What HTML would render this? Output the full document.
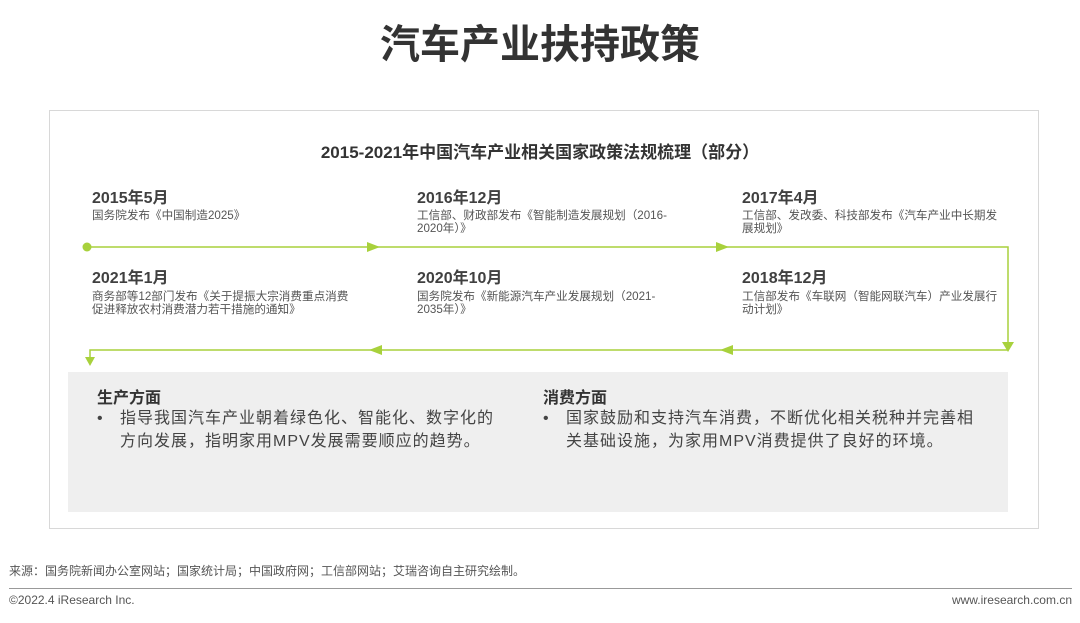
<!DOCTYPE html>
<html><head><meta charset="utf-8"><style>
body{margin:0;width:1080px;height:623px;background:#fff;position:relative;font-family:"Liberation Sans","Noto Sans CJK SC",sans-serif;color:#333;overflow:hidden}
.a{position:absolute;white-space:nowrap}
.t{font-size:40px;font-weight:bold;left:0;width:1080px;text-align:center;top:12px;color:#333}
.box{position:absolute;left:49px;top:110px;width:988px;height:417px;border:1px solid #d8d8d8}
.sub{font-size:17px;font-weight:bold;left:0;width:1080px;text-align:center;top:138px;color:#333}
.y{font-size:16px;font-weight:bold;color:#404040;line-height:18px}
.d{font-size:11.6px;color:#555;line-height:13px;white-space:normal}
.gray{position:absolute;left:68px;top:372px;width:940px;height:140px;background:#efefef}
.h{font-size:16px;font-weight:bold;color:#333}
.p{font-size:16px;letter-spacing:1px;color:#444;line-height:23px;white-space:normal}
</style></head><body>
<div class="a t">汽车产业扶持政策</div>
<div class="box"></div>
<div class="a sub">2015-2021年中国汽车产业相关国家政策法规梳理（部分）</div>

<div class="a y" style="left:92px;top:190px">2015年5月</div>
<div class="a d" style="left:92px;top:209px">国务院发布《中国制造2025》</div>
<div class="a y" style="left:417px;top:190px">2016年12月</div>
<div class="a d" style="left:417px;top:209px;width:262px">工信部、财政部发布《智能制造发展规划（2016-2020年）》</div>
<div class="a y" style="left:742px;top:190px">2017年4月</div>
<div class="a d" style="left:742px;top:209px;width:258px">工信部、发改委、科技部发布《汽车产业中长期发展规划》</div>

<div class="a y" style="left:92px;top:270px">2021年1月</div>
<div class="a d" style="left:92px;top:290px;width:265px">商务部等12部门发布《关于提振大宗消费重点消费促进释放农村消费潜力若干措施的通知》</div>
<div class="a y" style="left:417px;top:270px">2020年10月</div>
<div class="a d" style="left:417px;top:290px;width:250px">国务院发布《新能源汽车产业发展规划（2021-2035年）》</div>
<div class="a y" style="left:742px;top:270px">2018年12月</div>
<div class="a d" style="left:742px;top:290px;width:262px">工信部发布《车联网（智能网联汽车）产业发展行动计划》</div>

<svg class="a" style="left:0;top:0" width="1080" height="623">
<g stroke="#a8d13c" stroke-width="1.5" fill="none">
<polyline points="87,247 1008,247 1008,350 90,350 90,360"/>
</g>
<g fill="#a8d13c">
<circle cx="87" cy="247" r="4.5"/>
<polygon points="367,242 380,247 367,252"/>
<polygon points="716,242 729,247 716,252"/>
<polygon points="1002,342 1014,342 1008,352"/>
<polygon points="733,345 720,350 733,355"/>
<polygon points="382,345 369,350 382,355"/>
<polygon points="85,357 95,357 90,366"/>
</g>
</svg>

<div class="gray"></div>
<div class="a h" style="left:97px;top:384px">生产方面</div>
<div class="a p" style="left:97px;top:407px">•</div>
<div class="a p" style="left:120px;top:407px;width:378px">指导我国汽车产业朝着绿色化、智能化、数字化的方向发展，指明家用MPV发展需要顺应的趋势。</div>
<div class="a h" style="left:543px;top:384px">消费方面</div>
<div class="a p" style="left:543px;top:407px">•</div>
<div class="a p" style="left:566px;top:407px;width:412px">国家鼓励和支持汽车消费，不断优化相关税种并完善相关基础设施，为家用MPV消费提供了良好的环境。</div>

<div class="a" style="left:9px;top:562px;font-size:12px;color:#555">来源：国务院新闻办公室网站；国家统计局；中国政府网；工信部网站；艾瑞咨询自主研究绘制。</div>
<div class="a" style="left:9px;top:588px;width:1063px;height:1px;background:#999"></div>
<div class="a" style="left:9px;top:593px;font-size:12px;color:#555">©2022.4 iResearch Inc.</div>
<div class="a" style="right:8px;top:593px;font-size:12px;color:#555">www.iresearch.com.cn</div>
</body></html>
